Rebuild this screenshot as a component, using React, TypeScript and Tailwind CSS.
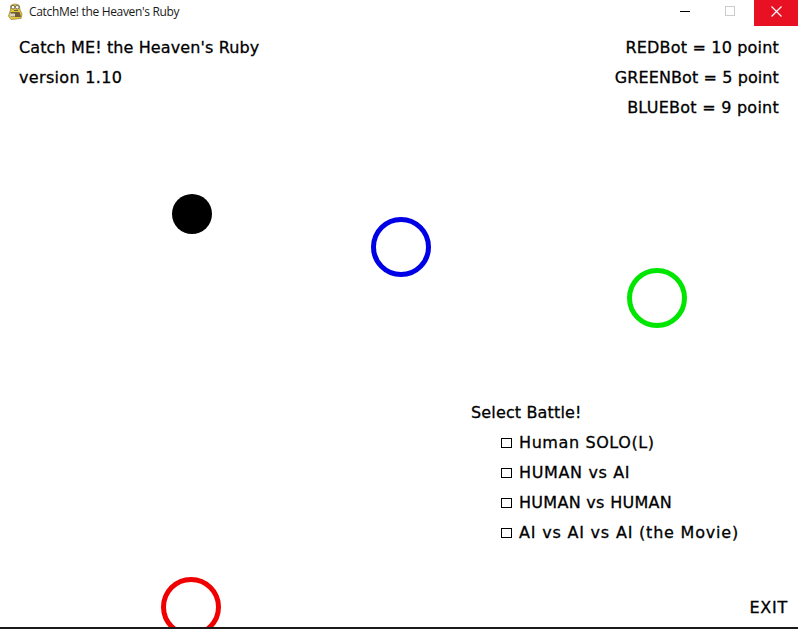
const BALLS = [
  { name: "black", className: "left-[172px] top-[194px] w-[40px] h-[40px] bg-black" },
  { name: "blue", className: "left-[371px] top-[217px] w-[60px] h-[60px] border-[5px] border-[#0000e6]" },
  { name: "green", className: "left-[627px] top-[268px] w-[60px] h-[60px] border-[5px] border-[#00e600]" },
  { name: "red", className: "left-[161px] top-[577px] w-[60px] h-[60px] border-[5px] border-[#f00000]" },
];

const MODES = [
  { label: "Human SOLO(L)", className: "tracking-[0.6px]" },
  { label: "HUMAN vs AI", className: "tracking-[0.64px]" },
  { label: "HUMAN vs HUMAN", className: "tracking-[0.3px]" },
  { label: "AI vs AI vs AI (the Movie)", className: "tracking-[0.8px]" },
];

function PygameIcon() {
  return (
    <svg width="16" height="18" viewBox="0 0 16 18" className="shrink-0">
      <path d="M3.5 3 C4.5 0.5 11.5 0.5 12.5 3 L13 7 L15 11 L14 15.5 L4 16.5 L1.5 13 L3.5 7 Z" fill="#e3c53c" stroke="#9a8a3a" strokeWidth="0.8" />
      <circle cx="6" cy="4.2" r="1.8" fill="#fff" stroke="#444" strokeWidth="0.7" />
      <circle cx="10.2" cy="4.2" r="1.8" fill="#fff" stroke="#444" strokeWidth="0.7" />
      <path d="M3.5 9 H12.5 L14 14 H4 Z" fill="#6e5c36" />
      <path d="M3 10.5 H8 V13.5 H3 Z" fill="#d8d3bc" />
      <path d="M7 7 H11 V8 H7 Z" fill="#6e5c36" />
    </svg>
  );
}

function TitleBar() {
  return (
    <div className="flex h-[26px] items-start bg-white">
      <div className="flex h-[24px] flex-1 items-center gap-[6px] pl-[7px]">
        <PygameIcon />
        <span className="font-['Open_Sans',sans-serif] text-[12px] text-[#1a1a1a] tracking-[-0.33px]">CatchMe! the Heaven's Ruby</span>
      </div>
      <div className="flex h-[22px] w-[45px] items-center justify-center">
        <div className="h-px w-[10px] bg-black" />
      </div>
      <div className="mr-[2px] flex h-[22px] w-[45px] items-center justify-center">
        <div className="h-[10px] w-[10px] border border-[#cccccc]" />
      </div>
      <div className="flex h-[26px] w-[44px] items-start justify-center bg-[#e81123] pt-[6px]">
        <svg width="11" height="11" viewBox="0 0 11 11">
          <path d="M0.5 0.5 L10.5 10.5 M10.5 0.5 L0.5 10.5" stroke="#fff" strokeWidth="1.2" fill="none" />
        </svg>
      </div>
    </div>
  );
}

export default function App() {
  return (
    <div className="relative flex h-[629px] w-[798px] flex-col overflow-hidden bg-white font-['DejaVu_Sans',sans-serif] text-[16px] text-black">
      <TitleBar />
      <div className="relative flex flex-1 flex-col border-b-2 border-[#1a1a1a] leading-[30px] [-webkit-text-stroke:0.3px_black]">
        <div className="flex justify-between pl-[19px] pr-[19px] pt-[7px]">
          <div>
            <div className="tracking-[0.12px]">Catch ME! the Heaven's Ruby</div>
            <div className="tracking-[0.33px]">version 1.10</div>
          </div>
          <div className="text-right">
            <div className="tracking-[0.18px]">REDBot = 10 point</div>
            <div className="tracking-[0.1px]">GREENBot = 5 point</div>
            <div className="tracking-[0.25px]">BLUEBot = 9 point</div>
          </div>
        </div>
        <div className="mt-auto flex flex-col pb-[4px] pl-[471px]">
          <div className="tracking-[0.15px]">Select Battle!</div>
          <div className="pl-[30px]">
            {MODES.map((mode) => (
              <div key={mode.label} className="flex items-center gap-[7px]">
                <span className="h-[10px] w-[11px] border border-black" />
                <span className={mode.className}>{mode.label}</span>
              </div>
            ))}
          </div>
          <div className="mt-[45px] flex justify-end pr-[10px] tracking-[0.75px]">EXIT</div>
        </div>
      </div>
      {BALLS.map((ball) => (
        <div key={ball.name} className={`absolute rounded-full ${ball.className}`} />
      ))}
      <div className="absolute bottom-0 left-0 h-[2px] w-full bg-[#1a1a1a]" />
    </div>
  );
}
